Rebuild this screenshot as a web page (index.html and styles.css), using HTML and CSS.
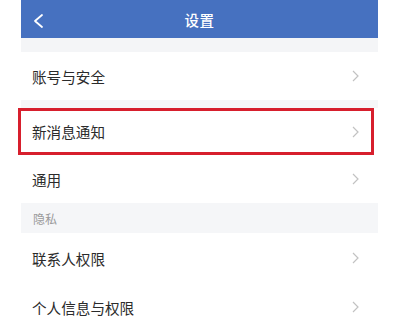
FILE: index.html
```html
<!DOCTYPE html>
<html lang="zh">
<head>
<meta charset="utf-8">
<link rel="stylesheet" href="styles.css">
</head>
<body>
<div class="page">
  <header class="topbar">
    <svg class="back" width="12" height="16" viewBox="0 0 12 16"><path d="M10 2 L3 8 L10 14" fill="none" stroke="#fff" stroke-width="1.8" stroke-linecap="round" stroke-linejoin="round"/></svg>
    <div class="title">设置</div>
  </header>
  <div class="gap-top"></div>
  <div class="row"><span>账号与安全</span><svg class="chev" width="7" height="12" viewBox="0 0 7 12"><path d="M1 1 L6 6 L1 11" fill="none" stroke="#c2c2c2" stroke-width="1.2"/></svg></div>
  <div class="gap-small"></div>
  <div class="row highlighted"><span>新消息通知</span><svg class="chev" width="7" height="12" viewBox="0 0 7 12"><path d="M1 1 L6 6 L1 11" fill="none" stroke="#c2c2c2" stroke-width="1.2"/></svg></div>
  <div class="row"><span>通用</span><svg class="chev" width="7" height="12" viewBox="0 0 7 12"><path d="M1 1 L6 6 L1 11" fill="none" stroke="#c2c2c2" stroke-width="1.2"/></svg></div>
  <div class="section">隐私</div>
  <div class="row tall"><span>联系人权限</span><svg class="chev" width="7" height="12" viewBox="0 0 7 12"><path d="M1 1 L6 6 L1 11" fill="none" stroke="#c2c2c2" stroke-width="1.2"/></svg></div>
  <div class="row"><span>个人信息与权限</span><svg class="chev" width="7" height="12" viewBox="0 0 7 12"><path d="M1 1 L6 6 L1 11" fill="none" stroke="#c2c2c2" stroke-width="1.2"/></svg></div>
</div>
</body>
</html>
```

FILE: styles.css
```css
html, body {
  margin: 0;
  padding: 0;
  background: #fff;
  overflow: hidden;
}
body {
  font-family: "Noto Sans CJK SC", "Noto Sans", sans-serif;
  color: #2b2b2b;
}
.page {
  margin-left: 21px;
  width: 357px;
}
.topbar {
  height: 38px;
  background: #4671c0;
  display: flex;
  align-items: center;
  justify-content: center;
  position: relative;
}
.back {
  position: absolute;
  left: 11px;
  top: 13px;
}
.title {
  color: #fff;
  font-size: 14.5px;
  font-weight: 500;
  letter-spacing: 0.5px;
}
.gap-top {
  height: 14px;
  background: #f4f5f7;
}
.gap-small {
  height: 8px;
  background: #f6f7f8;
}
.row {
  height: 48px;
  display: flex;
  align-items: center;
  justify-content: space-between;
  padding: 0 19px 0 11px;
  font-size: 14.6px;
  background: #fff;
}
.row.highlighted {
  height: 47px;
  position: relative;
}
.row.highlighted::after {
  content: "";
  position: absolute;
  left: -3px;
  right: 4px;
  top: 0;
  bottom: 0;
  border: 3px solid #d71f2d;
}
.row.tall {
  height: 50px;
}
.section {
  height: 30px;
  background: #f5f6f8;
  display: flex;
  align-items: center;
  padding-left: 12px;
  font-size: 12px;
  color: #9a9a9a;
}
```
